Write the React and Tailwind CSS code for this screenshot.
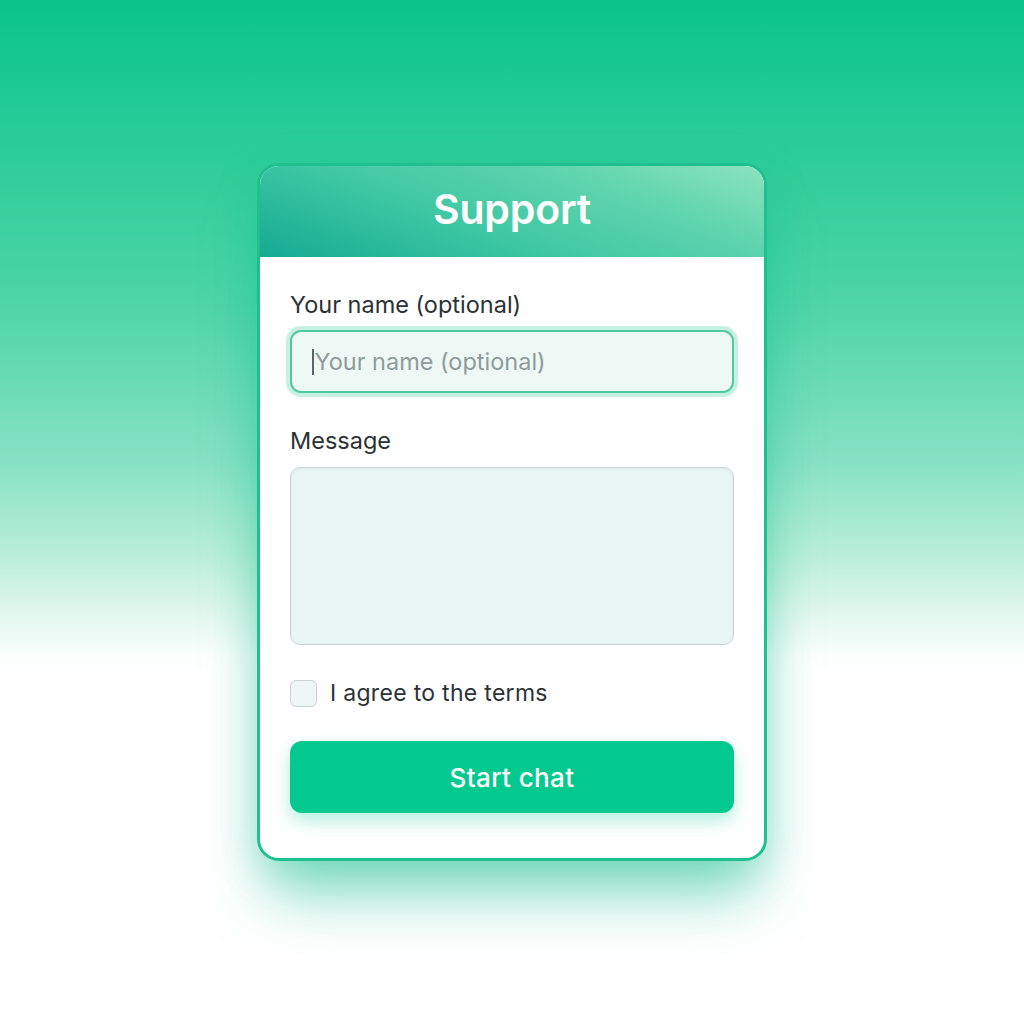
import React from "react";

export default function App() {
  return (
    <div
      className="w-full h-screen flex items-center justify-center bg-[linear-gradient(180deg,#0ac48c_0%,#2ccd98_15%,#4fd5a8_30%,#86e1c3_45%,#b8eed9_54%,#e2f7ef_60%,#fbfefd_64%,#ffffff_66%)]"
      style={{ fontFamily: "Inter, 'Noto Sans', sans-serif" }}
    >
      <div className="w-[510px] h-[698px] rounded-[22px] border-[3px] border-[#1fc08e] bg-white overflow-hidden flex flex-col shadow-[0_45px_60px_-12px_rgba(20,190,140,0.5),0_10px_40px_rgba(20,190,140,0.25)]">
        <div className="h-[91px] shrink-0 flex items-center justify-center bg-[linear-gradient(20deg,#14aa92_0%,#3fc8a3_40%,#5ed4ad_70%,#8be3bf_100%)]">
          <h1 className="text-white text-[41px] font-semibold tracking-[-0.2px] leading-none pb-[4px]">Support</h1>
        </div>
        <div className="flex flex-col px-[30px] pt-[34px]">
          <label className="text-[23.5px] leading-[28px] text-[#2b3235]">Your name (optional)</label>
          <div className="mt-[11px] h-[63px] rounded-[11px] border-2 border-[#4fc9a0] bg-[#eef8f5] shadow-[0_0_0_4px_#c6f0e2] flex items-center pl-[20px]">
            <span className="w-[1.5px] h-[26px] bg-[#58666a] mr-[1px]"></span>
            <span className="text-[23.5px] text-[#8d9c9a]">Your name (optional)</span>
          </div>
          <label className="mt-[34px] text-[23.5px] leading-[28px] text-[#2b3235]">Message</label>
          <div className="mt-[12px] h-[178px] rounded-[10px] border-[1.5px] border-[#c6d4d2] bg-[#eaf6f3] shadow-[inset_0_2px_4px_rgba(0,0,0,0.04)]"></div>
          <div className="mt-[35px] h-[27px] flex items-center gap-[13px]">
            <div className="w-[27px] h-[27px] rounded-[6px] border-[1.5px] border-[#c9d2d2] bg-[#eef5f4]"></div>
            <span className="text-[23px] leading-[27px] tracking-[0.3px] text-[#2b3235]">I agree to the terms</span>
          </div>
          <button className="mt-[34px] h-[72px] rounded-[12px] bg-[#04c98e] text-white text-[26px] tracking-[0.4px] font-medium shadow-[0_8px_18px_rgba(4,201,142,0.3)]">
            Start chat
          </button>
        </div>
      </div>
    </div>
  );
}
